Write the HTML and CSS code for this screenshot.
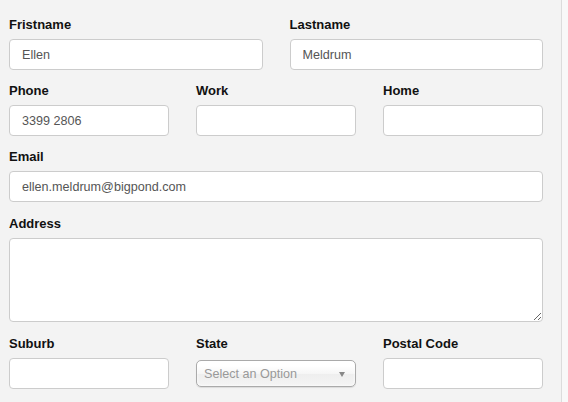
FILE: index.html
```html
<!DOCTYPE html>
<html>
<head>
<meta charset="utf-8">
<link rel="stylesheet" href="styles.css">
</head>
<body>
<div class="panel">
  <form class="form">
    <div class="row two">
      <div class="field"><label class="lbl">Fristname</label><input class="inp" type="text" value="Ellen"></div>
      <div class="field"><label class="lbl">Lastname</label><input class="inp" type="text" value="Meldrum"></div>
    </div>
    <div class="row three">
      <div class="field"><label class="lbl">Phone</label><input class="inp" type="text" value="3399 2806"></div>
      <div class="field"><label class="lbl">Work</label><input class="inp" type="text"></div>
      <div class="field"><label class="lbl">Home</label><input class="inp" type="text"></div>
    </div>
    <div class="row one">
      <div class="field"><label class="lbl">Email</label><input class="inp" type="text" value="ellen.meldrum@bigpond.com"></div>
    </div>
    <div class="row one spaced">
      <div class="field"><label class="lbl">Address</label><textarea class="inp area"></textarea></div>
    </div>
    <div class="row three spaced">
      <div class="field"><label class="lbl">Suburb</label><input class="inp" type="text"></div>
      <div class="field"><label class="lbl">State</label>
        <div class="chosen"><span class="chosen-text">Select an Option</span><span class="chosen-arrow"></span></div>
      </div>
      <div class="field"><label class="lbl">Postal Code</label><input class="inp" type="text"></div>
    </div>
  </form>
</div>
</body>
</html>
```

FILE: styles.css
```css
html, body {
  margin: 0;
  padding: 0;
  background: #f8f8f8;
  font-family: "Liberation Sans", Arial, sans-serif;
}
.panel {
  box-sizing: border-box;
  width: 562px;
  height: 402px;
  padding: 16px 18px 0 9px;
  background: #f3f3f3;
  border-right: 1px solid #dcdcdc;
  overflow: hidden;
}
.form {
  display: flex;
  flex-direction: column;
  gap: 12px;
}
.row {
  display: grid;
  column-gap: 27px;
}
.row.spaced { margin-top: 1px; }
.row.two { grid-template-columns: 1fr 1fr; }
.row.three { grid-template-columns: 1fr 1fr 1fr; }
.row.one { grid-template-columns: 1fr; }
.field {
  display: flex;
  flex-direction: column;
  min-width: 0;
}
.lbl {
  display: block;
  font-size: 13px;
  line-height: 18px;
  font-weight: bold;
  color: #111;
  margin-bottom: 5px;
}
.inp {
  display: block;
  box-sizing: border-box;
  width: 100%;
  height: 31px;
  margin: 0;
  padding: 0 12px;
  border: 1px solid #cccccc;
  border-radius: 4px;
  background: #fff;
  font-family: "Liberation Sans", Arial, sans-serif;
  font-size: 12.6px;
  color: #555;
  outline: none;
}
.area {
  height: 84px;
  resize: both;
}
.chosen {
  position: relative;
  box-sizing: border-box;
  height: 27px;
  margin-top: 2px;
  padding-left: 7px;
  border: 1px solid #aaa;
  border-radius: 5px;
  background: linear-gradient(#ffffff 20%, #f6f6f6 50%, #eeeeee 52%, #f4f4f4 100%);
  box-shadow: inset 0 0 3px #fff, 0 1px 1px rgba(0,0,0,0.1);
  display: flex;
  align-items: center;
}
.chosen-text {
  font-size: 12.6px;
  color: #999;
}
.chosen-arrow {
  position: absolute;
  right: 10px;
  top: 11px;
  width: 0;
  height: 0;
  border-left: 3px solid transparent;
  border-right: 3px solid transparent;
  border-top: 5px solid #888;
}
```
